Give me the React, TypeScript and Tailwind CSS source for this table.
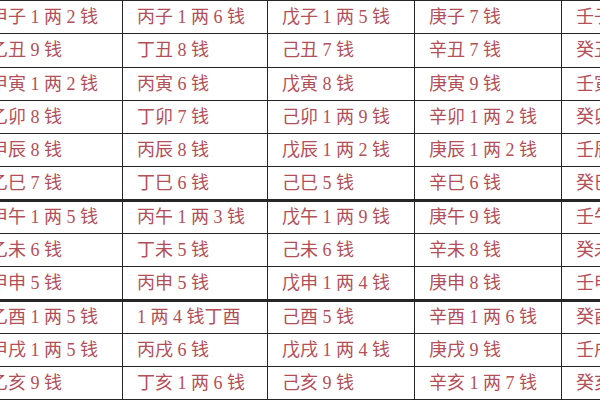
import React from "react";

type Row = { cells: string[]; h: string; b: string };

const rows: Row[] = [
  { cells: ["甲子 1 两 2 钱", "丙子 1 两 6 钱", "戊子 1 两 5 钱", "庚子 7 钱", "壬子 5 钱"], h: "h-[33px]", b: "border-b" },
  { cells: ["乙丑 9 钱", "丁丑 8 钱", "己丑 7 钱", "辛丑 7 钱", "癸丑 7 钱"], h: "h-[34px]", b: "border-b" },
  { cells: ["甲寅 1 两 2 钱", "丙寅 6 钱", "戊寅 8 钱", "庚寅 9 钱", "壬寅 9 钱"], h: "h-[33px]", b: "border-b" },
  { cells: ["乙卯 8 钱", "丁卯 7 钱", "己卯 1 两 9 钱", "辛卯 1 两 2 钱", "癸卯 1 两 2 钱"], h: "h-[33px]", b: "border-b" },
  { cells: ["甲辰 8 钱", "丙辰 8 钱", "戊辰 1 两 2 钱", "庚辰 1 两 2 钱", "壬辰 1 两"], h: "h-[33px]", b: "border-b" },
  { cells: ["乙巳 7 钱", "丁巳 6 钱", "己巳 5 钱", "辛巳 6 钱", "癸巳 7 钱"], h: "h-[35px]", b: "border-b-[3px]" },
  { cells: ["甲午 1 两 5 钱", "丙午 1 两 3 钱", "戊午 1 两 9 钱", "庚午 9 钱", "壬午 8 钱"], h: "h-[32px]", b: "border-b" },
  { cells: ["乙未 6 钱", "丁未 5 钱", "己未 6 钱", "辛未 8 钱", "癸未 7 钱"], h: "h-[33px]", b: "border-b" },
  { cells: ["甲申 5 钱", "丙申 5 钱", "戊申 1 两 4 钱", "庚申 8 钱", "壬申 7 钱"], h: "h-[35px]", b: "border-b-[3px]" },
  { cells: ["乙酉 1 两 5 钱", "1 两 4 钱丁酉", "己酉 5 钱", "辛酉 1 两 6 钱", "癸酉 8 钱"], h: "h-[32px]", b: "border-b" },
  { cells: ["甲戌 1 两 5 钱", "丙戌 6 钱", "戊戌 1 两 4 钱", "庚戌 9 钱", "壬戌 1 两"], h: "h-[33px]", b: "border-b" },
  { cells: ["乙亥 9 钱", "丁亥 1 两 6 钱", "己亥 9 钱", "辛亥 1 两 7 钱", "癸亥 6 钱"], h: "h-[35px]", b: "border-b-[3px]" },
];

const widths = ["w-[147px]", "w-[145px]", "w-[147px]", "w-[147px]", "w-[147px]"];

export default function App() {
  return (
    <div className="w-[600px] h-[400px] overflow-hidden bg-white">
      <div
        className="-ml-[24px] w-[740px] border-t border-[#262626] text-[18px] text-[#b24f59]"
        style={{ fontFamily: "'Liberation Serif', 'Noto Sans CJK SC', serif" }}
      >
        {rows.map((r, i) => (
          <div key={i} className={`flex ${r.h} ${r.b} border-[#262626]`}>
            {r.cells.map((c, j) => (
              <div
                key={j}
                className={`${widths[j]} shrink-0 border-r border-[#262626] pl-[14px] flex items-center whitespace-pre`}
              >
                {c}
              </div>
            ))}
          </div>
        ))}
      </div>
    </div>
  );
}
